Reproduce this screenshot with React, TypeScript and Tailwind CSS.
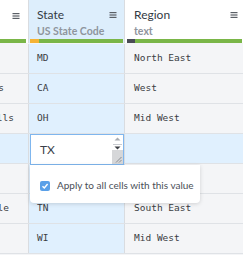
import React from "react";

const sans = { fontFamily: "Lato, 'Open Sans', sans-serif" };
const mono = { fontFamily: "'DejaVu Sans Mono', 'Liberation Mono', monospace" };

function MenuIcon() {
  return (
    <svg width="8" height="7" viewBox="0 0 8 7" className="shrink-0">
      <rect x="0.5" y="0" width="7" height="1.2" fill="#5a5f66" />
      <rect x="0.5" y="2.4" width="7" height="1.2" fill="#5a5f66" />
      <rect x="0.5" y="4.8" width="7" height="1.2" fill="#5a5f66" />
    </svg>
  );
}

type Row = { c1: string; pr: string; st: string; rg: string; sel?: boolean };

const rows: Row[] = [
  { c1: "", pr: "pr-[20px]", st: "MD", rg: "North East" },
  { c1: "Los Angeles", pr: "pr-[24px]", st: "CA", rg: "West" },
  { c1: "Cuyahoga Falls", pr: "pr-[14px]", st: "OH", rg: "Mid West" },
  { c1: "", pr: "pr-[20px]", st: "", rg: "", sel: true },
  { c1: "", pr: "pr-[20px]", st: "", rg: "" },
  { c1: "Nashville", pr: "pr-[19px]", st: "TN", rg: "South East" },
  { c1: "", pr: "pr-[20px]", st: "WI", rg: "Mid West" },
];

export default function App() {
  return (
    <div className="relative w-[243px] h-[255px] overflow-hidden bg-[#f4f5f7]" style={sans}>
      {/* Header */}
      <div className="flex h-[44px] bg-[#f4f5f7]">
        <div className="w-[29px] h-[43px] flex flex-col bg-white border-r border-[#d9dce0]">
          <div className="flex justify-end pr-[8px] pt-[13px] h-[39px]">
            <MenuIcon />
          </div>
          <div className="h-[4px] bg-[#7ab648] mr-[2px]" />
        </div>
        <div className="w-[96px] h-[43px] flex flex-col bg-[#ddeefc] border-r border-[#d9dce0]">
          <div className="flex flex-col h-[39px] pl-[8px] pr-[7px] pt-[8px]">
            <div className="flex items-center justify-between h-[14px]">
              <span className="text-[12px] leading-[14px] text-[#333a44]">State</span>
              <MenuIcon />
            </div>
            <span className="text-[10.5px] font-bold leading-[12px] mt-[3px] text-[#8f959d]">US State Code</span>
          </div>
          <div className="flex h-[4px] ml-[1px] mr-[1px]">
            <div className="w-[9px] bg-[#f5b335]" />
            <div className="flex-1 bg-[#7ab648]" />
          </div>
        </div>
        <div className="flex-1 h-[43px] flex flex-col bg-white">
          <div className="flex flex-col h-[39px] pl-[9px] pr-[5px] pt-[8px]">
            <div className="flex items-center justify-between h-[14px]">
              <span className="text-[12px] leading-[14px] text-[#333a44]">Region</span>
              <MenuIcon />
            </div>
            <span className="text-[10.5px] font-bold leading-[12px] mt-[3px] text-[#8f959d]">text</span>
          </div>
          <div className="flex h-[4px] ml-[2px] mr-[1px]">
            <div className="w-[8px] bg-[#4a4c55]" />
            <div className="flex-1 bg-[#7ab648]" />
          </div>
        </div>
      </div>

      {/* Body */}
      <div className="flex flex-col text-[9.5px] text-[#3a3c42]" style={mono}>
        {rows.map((r, i) => (
          <div
            key={i}
            className={`flex h-[30px] border-b border-[#dfe2e6] ${r.sel ? "bg-[#e0f0fe]" : ""}`}
          >
            <div className={`w-[29px] flex items-center justify-end overflow-hidden border-r border-[#d9dce0] ${r.pr}`}>
              <span className="shrink-0 whitespace-nowrap">{r.c1}</span>
            </div>
            <div className="w-[96px] flex items-center pl-[8px] bg-[#e0f0fe] border-r border-[#d9dce0]">
              {r.st}
            </div>
            <div className="flex-1 flex items-center pl-[9px]">{r.rg}</div>
          </div>
        ))}
      </div>

      {/* Editor textarea overlay */}
      <div className="absolute left-[30px] top-[134px] w-[94px] h-[31px] bg-white border border-[#7fb6ee] flex">
        <div className="flex-1 flex items-center pl-[9px] text-[12px] text-[#3a3f4a]" style={sans}>
          TX
        </div>
        <div className="w-[11px] flex flex-col">
          <div className="h-[15px] flex flex-col items-center pt-[2px] bg-white">
            <svg width="7" height="4" viewBox="0 0 7 4">
              <path d="M0.5 3.5 L3.5 0.5 L6.5 3.5 Z" fill="#a8acb2" />
            </svg>
            <div className="w-[9px] h-[1px] bg-[#c8cbd0] mt-[3px]" />
            <svg width="7" height="4" viewBox="0 0 7 4" className="mt-[1px]">
              <path d="M0.5 0.5 L6.5 0.5 L3.5 3.5 Z" fill="#3c3f45" />
            </svg>
          </div>
          <div className="flex-1 bg-[#d6d7d9] relative">
            <svg width="7" height="7" viewBox="0 0 7 7" className="absolute right-[1px] bottom-[1px]">
              <path d="M6.5 1 L1 6.5 M6.5 4 L4 6.5" stroke="#8a8d92" strokeWidth="1" />
            </svg>
          </div>
        </div>
      </div>

      {/* Popup */}
      <div className="absolute left-[30px] top-[165px] w-[170px] h-[38px] bg-white rounded-b-[4px] shadow-[0_1px_4px_rgba(0,0,0,0.15)] flex items-center pl-[10px] pt-[3px] gap-[7px]">
        <div className="w-[10px] h-[10px] rounded-[2px] bg-[#5aa0e8] flex items-center justify-center">
          <svg width="8" height="8" viewBox="0 0 8 8">
            <path d="M1.5 4.2 L3.3 6 L6.6 2" stroke="white" strokeWidth="1.4" fill="none" />
          </svg>
        </div>
        <span className="text-[10px] text-[#4a4f58] whitespace-nowrap" style={sans}>
          Apply to all cells with this value
        </span>
      </div>
    </div>
  );
}
